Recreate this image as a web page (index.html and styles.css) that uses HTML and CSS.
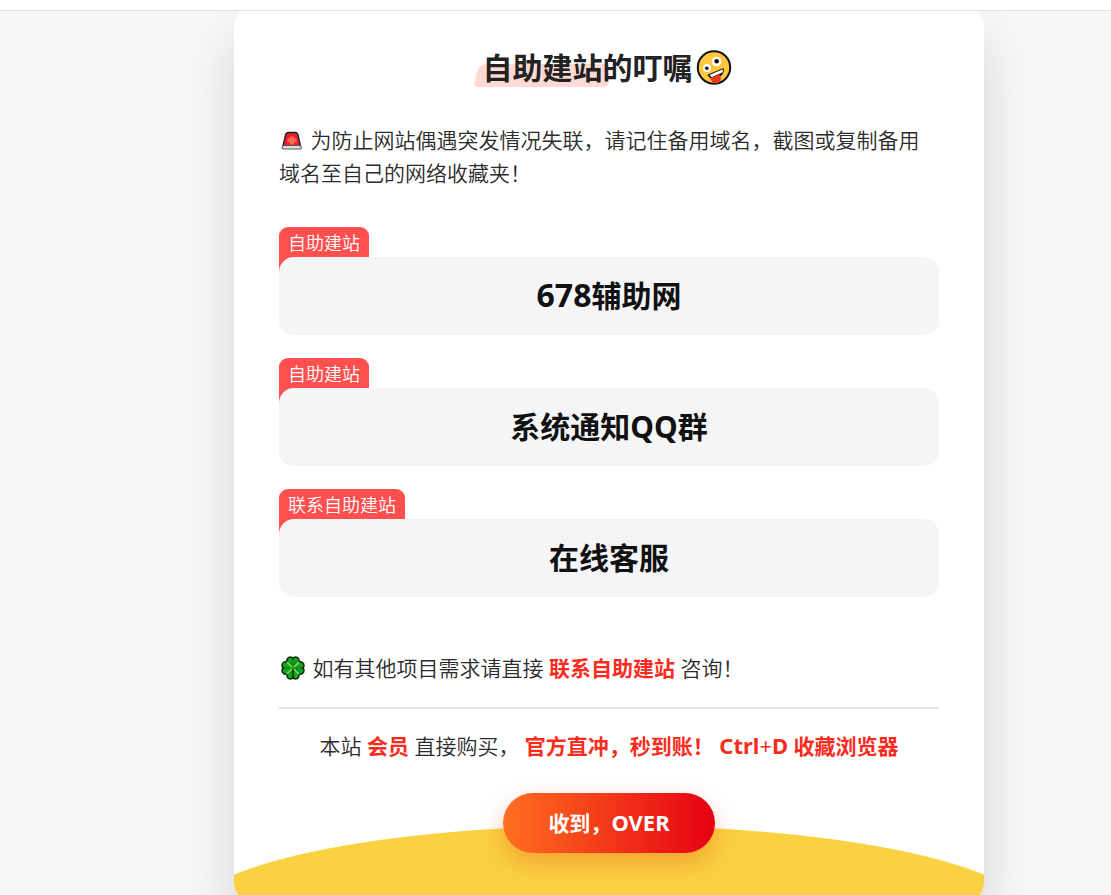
FILE: index.html
```html
<!DOCTYPE html>
<html lang="zh-CN">

<head>
    <meta charset="UTF-8">
    <meta name="viewport" content="width=device-width, initial-scale=1.0">
    <title>自助建站的叮嘱</title>
    <link rel="stylesheet" href="styles.css">
</head>

<body>
    <header class="top-bar"></header>

    <div class="page">
        <main class="notice">
            <h1 class="notice-title">
                <span class="title-text">自助建站的叮嘱</span>
                <svg class="title-emoji" viewBox="0 0 36 36" aria-hidden="true">
                    <circle cx="18" cy="17.5" r="16.2" fill="#ffc83d" stroke="#111" stroke-width="2" />
                    <circle cx="11" cy="18" r="4" fill="#fff" />
                    <circle cx="20.5" cy="11.5" r="4.8" fill="#fff" />
                    <circle cx="10.8" cy="18.2" r="1.8" fill="#111" />
                    <circle cx="20.7" cy="11.3" r="2.3" fill="#111" />
                    <path d="M11.5 24.8 L27.5 18 C29 23 25.5 26.5 21 28 C17 29.5 13 28.5 11.5 24.8 Z" fill="#111" />
                    <path d="M13.5 25 L26.8 19.3 L26.8 22.2 L15.5 27.2 Z" fill="#fff" />
                    <path d="M14.5 28 L23.5 24.2 C25.5 27.5 25.3 31.5 22 33 C18.5 34.2 14.8 32 14.5 28 Z" fill="#e8391c" />
                </svg>
            </h1>

            <p class="notice-text">
                <svg class="icon-siren" viewBox="0 0 26 24" aria-hidden="true">
                    <path d="M4 17 L6.5 6 Q7.2 3.5 9.5 3.5 H16 Q18.4 3.5 19 6 L21.5 17 Z" fill="#ee1c2e" stroke="#222" stroke-width="1.4" />
                    <path d="M11 7.5 h4 v2 h2.5 v4 H15 v2 h-4 v-2 H8.5 v-4 H11 Z" fill="#ff6a4d" />
                    <path d="M4 16.5 H21.5 L22.5 19 Q22.5 20 21.5 20 H4 Q3 20 3 19 Z" fill="#ddd" stroke="#555" stroke-width="1" />
                </svg>
                为防止网站偶遇突发情况失联，请记住备用域名，截图或复制备用域名至自己的网络收藏夹！
            </p>

            <div class="link-list">
                <a class="link-item" href="#">
                    <span class="link-tag">自助建站</span>
                    <span class="link-box"><span class="number">678</span>辅助网</span>
                </a>
                <a class="link-item" href="#">
                    <span class="link-tag">自助建站</span>
                    <span class="link-box">系统通知QQ群</span>
                </a>
                <a class="link-item" href="#">
                    <span class="link-tag">联系自助建站</span>
                    <span class="link-box">在线客服</span>
                </a>
            </div>

            <p class="notice-text">
                <svg class="icon-clover" viewBox="0 0 28 28" aria-hidden="true">
                    <g fill="#17a321" stroke="#0b2b0c" stroke-width="1.5">
                        <path d="M14 14 C8 11 7 7 8.5 4.5 C10 2.5 13 2.5 14 4.5 C15 2.5 18 2.5 19.5 4.5 C21 7 20 11 14 14 Z" />
                        <path d="M14 14 C17 8 21 7 23.5 8.5 C25.5 10 25.5 13 23.5 14 C25.5 15 25.5 18 23.5 19.5 C21 21 17 20 14 14 Z" />
                        <path d="M14 14 C20 17 21 21 19.5 23.5 C18 25.5 15 25.5 14 23.5 C13 25.5 10 25.5 8.5 23.5 C7 21 8 17 14 14 Z" />
                        <path d="M14 14 C11 20 7 21 4.5 19.5 C2.5 18 2.5 15 4.5 14 C2.5 13 2.5 10 4.5 8.5 C7 7 11 8 14 14 Z" />
                    </g>
                    <path d="M8 8 L20 20 M20 8 L8 20" stroke="#5fdc4c" stroke-width="2" />
                    <path d="M14 6 V14 M6 14 H22" stroke="#0f7d1a" stroke-width="1" />
                    <path d="M14 15 V25" stroke="#0b2b0c" stroke-width="1.5" />
                </svg>
                如有其他项目需求请直接 <a class="red" href="#">联系自助建站</a> 咨询！
            </p>

            <hr class="line">

            <p class="notice-text center">本站 <a class="red" href="#">会员</a> 直接购买， <b class="red">官方直冲，秒到账！</b> <b class="red"><span class="latin">Ctrl<span class="plus">+</span>D</span> 收藏浏览器</b></p>

            <button class="btn-ok" type="button">收到，<span class="latin">OVER</span></button>
        </main>
    </div>
</body>

</html>
```

FILE: styles.css
```css
* {
    box-sizing: border-box;
}

body {
    margin: 0;
    background-color: #f6f8fa;
    color: #2b2b2b;
    font-family: "Noto Sans", "Noto Sans CJK SC", sans-serif;
    font-size: 21px;
    font-weight: 350;
    line-height: 33px;
}

.top-bar {
    position: relative;
    z-index: 2;
    height: 11px;
    background-color: #fff;
    border-bottom: 1px solid #e2e3e4;
}

.page {
    padding-left: 107px;
}

.notice {
    position: relative;
    z-index: 1;
    display: flex;
    flex-direction: column;
    max-width: 750px;
    margin: -6px auto 0;
    padding: 40px 45px 51px;
    background-color: #fff;
    border-radius: 22px;
    box-shadow: 0 30px 60px rgba(0, 0, 0, 0.15);
}

/* yellow hill at the bottom of the card */
.notice::before {
    content: "";
    position: absolute;
    z-index: -1;
    inset: 0;
    border-radius: 22px;
    background: radial-gradient(425px 92px at 50% calc(100% + 13px), #fad141 99%, transparent 100%);
}

.notice-title {
    display: flex;
    justify-content: center;
    align-items: center;
    gap: 3px;
    margin: 0 0 34px;
    padding-right: 4px;
    color: #222;
    font-size: 30px;
    font-weight: 700;
    line-height: 45px;
}

.title-text {
    position: relative;
    z-index: 0;
}

.title-text::before {
    content: "";
    position: absolute;
    z-index: -1;
    left: -7px;
    bottom: 3px;
    width: 134px;
    height: 23px;
    border-radius: 8px 8px 4px 4px;
    background-color: #ffdad4;
    transform: skewX(-12deg);
}

.title-emoji {
    width: 36px;
    height: 36px;
}

.notice-text {
    margin: 0;
}

.icon-siren {
    width: 26px;
    height: 24px;
    vertical-align: -5px;
}

.icon-clover {
    width: 28px;
    height: 28px;
    vertical-align: -6px;
}

.link-list {
    display: flex;
    flex-direction: column;
    gap: 23px;
    margin: 37px 0 55px;
}

.link-item {
    display: flex;
    flex-direction: column;
    align-items: flex-start;
    color: #111;
    text-decoration: none;
}

.link-tag {
    height: 45px;
    margin-bottom: -15px;
    padding: 0 9px;
    border-radius: 9px 9px 0 0;
    background-color: #ff4f4f;
    color: #fff;
    font-size: 18px;
}

.link-box {
    position: relative;
    width: 100%;
    padding: 16px;
    border-radius: 15px;
    background-color: #f3f5f7;
    font-size: 30px;
    font-weight: 700;
    line-height: 46px;
    text-align: center;
}

.number {
    font-size: 32px;
    line-height: 1;
}

.latin {
    font-size: 22px;
    line-height: 1;
}

.red {
    color: #fb2b1d;
    font-weight: 700;
    text-decoration: none;
}

.plus {
    font-weight: 400;
}

.line {
    width: 100%;
    margin: 22px 0 21px;
    border: 0;
    border-top: 2px solid #e6e6e6;
}

.center {
    text-align: center;
}

.btn-ok {
    align-self: center;
    height: 60px;
    margin-top: 30px;
    padding: 0 45px 2px;
    border: 0;
    border-radius: 30px;
    background: linear-gradient(90deg, #ff6f20, #e60012);
    box-shadow: 0 10px 24px rgba(230, 60, 18, 0.3);
    color: #fff;
    font-family: inherit;
    font-size: 21px;
    font-weight: 700;
    cursor: pointer;
}
```
